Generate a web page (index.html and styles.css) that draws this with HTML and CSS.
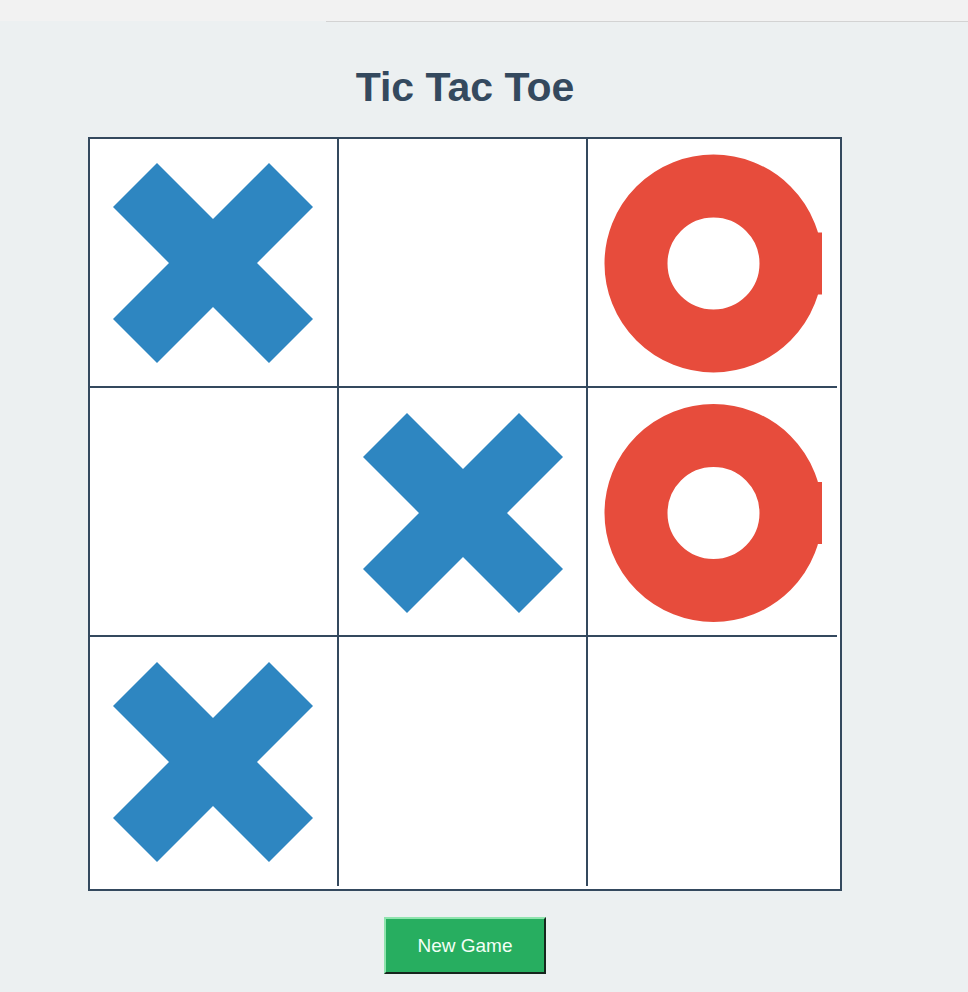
FILE: index.html
```html
<!DOCTYPE html>
<html lang="en">
<head>
<meta charset="utf-8">
<title>Tic Tac Toe</title>
<link rel="stylesheet" href="styles.css">
</head>
<body>
<div class="topbar"></div>
<div class="topline"><span class="topline-gap"></span><span class="topline-rule"></span></div>
<main class="game">
  <h1 class="title">Tic Tac Toe</h1>
  <div class="board">
    <div class="cell"><svg class="mark" viewBox="0 0 247 247"><polygon class="x" points="67,24 123,80 179,24 223,68 167,124 223,180 179,224 123,168 67,224 23,180 79,124 23,68"/></svg></div>
    <div class="cell"></div>
    <div class="cell"><svg class="mark" viewBox="0 0 247 247"><defs><clipPath id="c1"><rect x="0" y="0" width="234" height="247"/></clipPath></defs><g clip-path="url(#c1)"><circle class="o" cx="125.5" cy="124.5" r="77.5"/><rect class="o-fill" x="224" y="93.5" width="12" height="62"/></g></svg></div>
    <div class="cell"></div>
    <div class="cell"><svg class="mark" viewBox="0 0 247 247"><polygon class="x" points="68,25 124,81 180,25 224,69 168,125 224,181 180,225 124,169 68,225 24,181 80,125 24,69"/></svg></div>
    <div class="cell"><svg class="mark" viewBox="0 0 247 247"><defs><clipPath id="c2"><rect x="0" y="0" width="234" height="247"/></clipPath></defs><g clip-path="url(#c2)"><circle class="o" cx="125.5" cy="125" r="77.5"/><rect class="o-fill" x="224" y="94" width="12" height="62"/></g></svg></div>
    <div class="cell"><svg class="mark" viewBox="0 0 247 247"><polygon class="x" points="67,25 123,81 179,25 223,69 167,125 223,181 179,225 123,169 67,225 23,181 79,125 23,69"/></svg></div>
    <div class="cell"></div>
    <div class="cell"></div>
  </div>
  <div class="actions"><button class="new-game" type="button">New Game</button></div>
</main>
</body>
</html>
```
FILE: styles.css
```css
html, body {
  margin: 0;
  padding: 0;
  background: #ecf0f1;
  font-family: "Liberation Sans", Arial, sans-serif;
}

.topbar {
  height: 21px;
  background: #f2f2f2;
}

.topline {
  display: flex;
  height: 1px;
}

.topline-gap {
  width: 326px;
}

.topline-rule {
  flex: 1;
  background: #d3d3d3;
}

.game {
  width: 754px;
  margin-left: 88px;
  display: flex;
  flex-direction: column;
  align-items: center;
}

.title {
  margin: 42px 0 0 0;
  height: 46px;
  line-height: 46px;
  font-size: 41px;
  font-weight: bold;
  color: #34495e;
  text-align: center;
}

.board {
  margin-top: 27px;
  width: 750px;
  height: 750px;
  border: 2px solid #34495e;
  background: #ffffff;
  display: grid;
  grid-template-columns: repeat(3, 249px);
  grid-template-rows: repeat(3, 249px);
  align-content: start;
  justify-content: start;
}

.cell {
  box-sizing: border-box;
  background: #ffffff;
  display: flex;
}

.cell:nth-child(3n+1),
.cell:nth-child(3n+2) {
  border-right: 2px solid #34495e;
}

.cell:nth-child(-n+6) {
  border-bottom: 2px solid #34495e;
}

.mark {
  width: 247px;
  height: 247px;
  display: block;
}

.x {
  fill: #2e86c1;
}

.o {
  fill: none;
  stroke: #e74c3c;
  stroke-width: 63;
}

.o-fill {
  fill: #e74c3c;
}

.actions {
  margin-top: 26px;
  display: flex;
  justify-content: center;
  width: 100%;
}

.new-game {
  box-sizing: border-box;
  width: 162px;
  height: 57px;
  background: #27ae60;
  color: #f4fff6;
  font-family: "Liberation Sans", Arial, sans-serif;
  font-size: 19px;
  border-style: solid;
  border-width: 2px;
  border-color: #8fe4ae #17261d #17261d #8fe4ae;
  padding: 0;
}
```
